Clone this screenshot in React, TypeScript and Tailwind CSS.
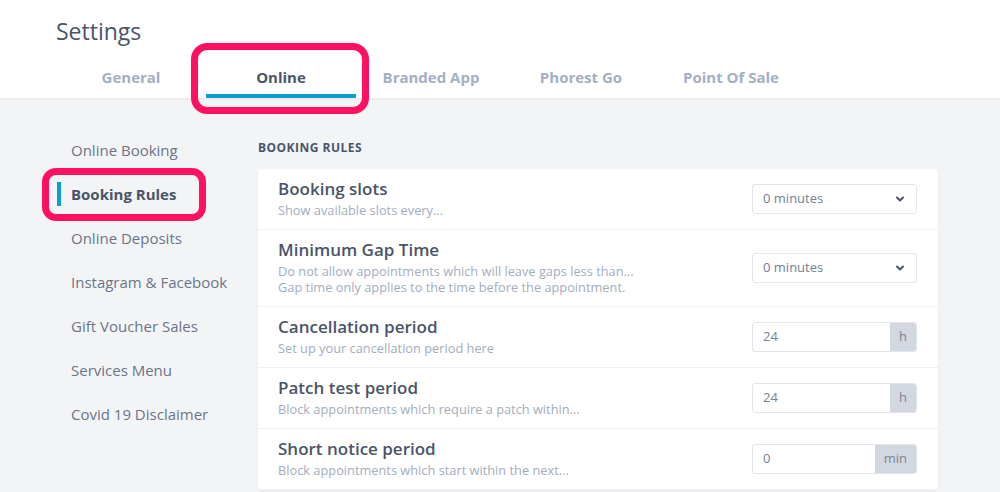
import { useState } from "react";

const tabs = ["General", "Online", "Branded App", "Phorest Go", "Point Of Sale"];

const sideItems = [
  "Online Booking",
  "Booking Rules",
  "Online Deposits",
  "Instagram & Facebook",
  "Gift Voucher Sales",
  "Services Menu",
  "Covid 19 Disclaimer",
];

type Rule = {
  title: string;
  desc: string[];
  kind: "select" | "input";
  value: string;
  unit?: string;
};

const rules: Rule[] = [
  { title: "Booking slots", desc: ["Show available slots every..."], kind: "select", value: "0 minutes" },
  {
    title: "Minimum Gap Time",
    desc: [
      "Do not allow appointments which will leave gaps less than...",
      "Gap time only applies to the time before the appointment.",
    ],
    kind: "select",
    value: "0 minutes",
  },
  { title: "Cancellation period", desc: ["Set up your cancellation period here"], kind: "input", value: "24", unit: "h" },
  { title: "Patch test period", desc: ["Block appointments which require a patch within..."], kind: "input", value: "24", unit: "h" },
  { title: "Short notice period", desc: ["Block appointments which start within the next..."], kind: "input", value: "0", unit: "min" },
];

const Chevron = () => (
  <svg width="10" height="10" viewBox="0 0 10 10" className="text-[#4a5568]">
    <path d="M2 3.5 L5 6.5 L8 3.5" fill="none" stroke="currentColor" strokeWidth="2" strokeLinecap="round" strokeLinejoin="round" />
  </svg>
);

const Control = ({ rule }: { rule: Rule }) => {
  if (rule.kind === "select") {
    return (
      <div className="w-[165px] h-[30px] flex items-center justify-between pl-[10px] pr-[11px] border border-[#e3e5ec] rounded-[3px] bg-white text-[13px] text-[#718096]">
        <span>{rule.value}</span>
        <Chevron />
      </div>
    );
  }
  return (
    <div className="w-[165px] h-[30px] flex border border-[#e3e5ec] rounded-[3px] bg-white text-[13px] text-[#718096] overflow-hidden">
      <div className="flex-1 flex items-center pl-[10px]">{rule.value}</div>
      <div className="flex items-center justify-center px-[9px] bg-[#d3d7df] text-[#7b8496]">{rule.unit}</div>
    </div>
  );
};

export default function App() {
  const [activeTab] = useState("Online");
  const [activeItem] = useState("Booking Rules");

  return (
    <div className="w-[1000px] h-[492px] overflow-hidden bg-[#f3f4f6] relative" style={{ fontFamily: '"Open Sans", "Liberation Sans", sans-serif' }}>
      {/* Header */}
      <div className="h-[98px] bg-white flex flex-col px-[56px] shadow-[0_1px_3px_rgba(0,0,0,0.06)] relative z-10">
        <h1 className="pt-[17px] text-[23px] leading-[28px] font-medium text-[#4a5568]">Settings</h1>
        <div className="mt-auto flex">
          {tabs.map((t) => (
            <div
              key={t}
              className={`w-[150px] h-[44px] pt-[6px] flex items-center justify-center border-b-4 text-[15px] font-bold ${
                t === activeTab ? "border-[#0a9cd5] text-[#4a5568]" : "border-transparent text-[#a3afc3]"
              }`}
            >
              {t}
            </div>
          ))}
        </div>
      </div>

      {/* Body */}
      <div className="flex px-[56px]">
        <ul className="w-[202px] pt-[30px]">
          {sideItems.map((s) => (
            <li
              key={s}
              className={`h-[44px] flex items-center pl-[15px] text-[15px] relative ${
                s === activeItem ? "font-bold text-[#4a5568]" : "text-[#6b7589]"
              }`}
            >
              {s === activeItem && <span className="absolute left-[1px] top-[10px] w-[4px] h-[24px] bg-[#0a9cd5]" />}
              {s}
            </li>
          ))}
        </ul>

        <div className="w-[680px] pt-[42px]">
          <h2 className="text-[12px] leading-[16px] font-bold tracking-[0.04em] text-[#4a5568] mb-[13px]">BOOKING RULES</h2>
          <div className="bg-white rounded-[4px] shadow-[0_1px_3px_rgba(0,0,0,0.06)]">
            {rules.map((r) => (
              <div key={r.title} className="flex items-center justify-between pl-[20px] pr-[21px] pt-[10px] pb-[11px] border-b border-[#eef0f3]">
                <div>
                  <div className="text-[17px] leading-[20px] font-semibold text-[#4a5568]">{r.title}</div>
                  <div className="mt-[3px] text-[12.8px] leading-[16px] text-[#a3adc0]">
                    {r.desc.map((d) => (
                      <div key={d}>{d}</div>
                    ))}
                  </div>
                </div>
                <Control rule={r} />
              </div>
            ))}
          </div>
        </div>
      </div>

      {/* Annotation highlights */}
      <div className="absolute left-[191px] top-[43px] w-[178px] h-[71px] border-[7px] border-[#ff1060] rounded-[16px] z-20 pointer-events-none" />
      <div className="absolute left-[42px] top-[168px] w-[164px] h-[53px] border-[7px] border-[#ff1060] rounded-[14px] z-20 pointer-events-none" />
    </div>
  );
}
